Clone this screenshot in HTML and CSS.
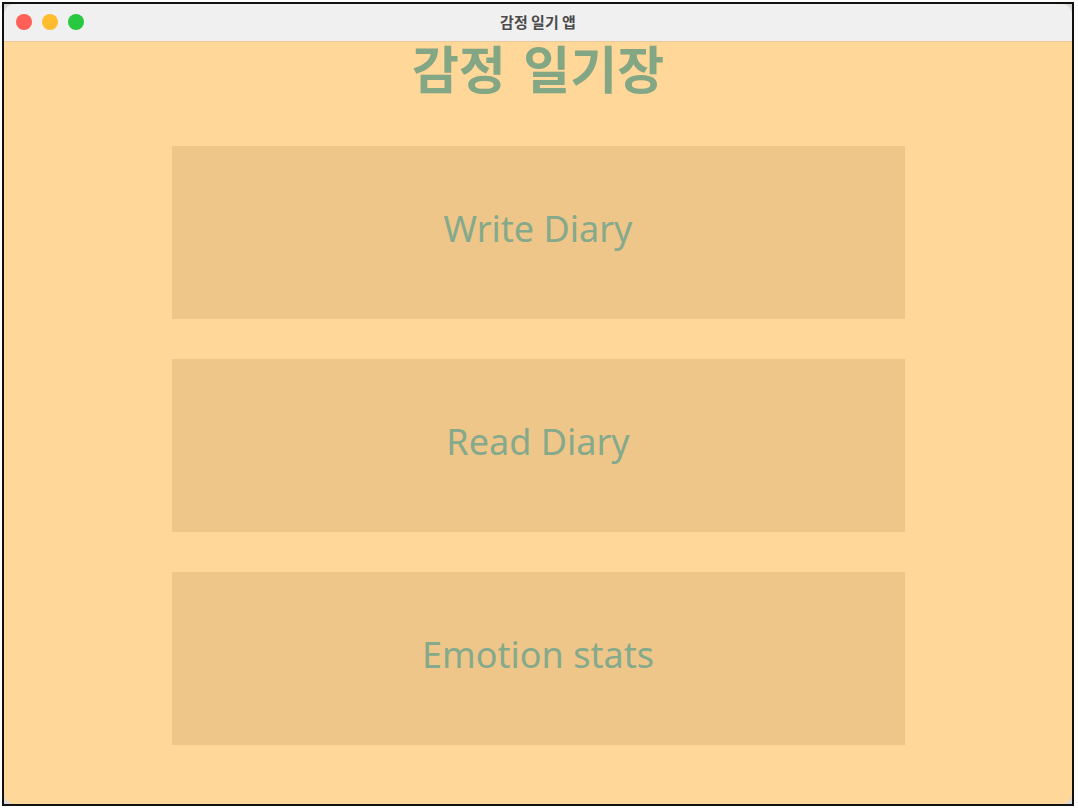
FILE: index.html
```html
<!DOCTYPE html>
<html>
<head>
<meta charset="utf-8">
<link rel="stylesheet" href="styles.css">
</head>
<body>
<div class="frame">
  <div class="window">
    <div class="titlebar">
      <div class="lights">
        <span class="light red"></span>
        <span class="light yellow"></span>
        <span class="light green"></span>
      </div>
      <div class="wtitle">감정 일기 앱</div>
    </div>
    <div class="content">
      <h1 class="heading">감정 일기장</h1>
      <div class="buttons">
        <div class="btn">Write Diary</div>
        <div class="btn">Read Diary</div>
        <div class="btn">Emotion stats</div>
      </div>
    </div>
  </div>
</div>
</body>
</html>
```
FILE: styles.css
```css
html, body {
  margin: 0;
  padding: 0;
  background: #ffffff;
  width: 1078px;
  height: 809px;
  overflow: hidden;
}
.frame {
  margin: 2px 0 0 2px;
  width: 1072px;
  height: 804px;
  box-sizing: border-box;
  border: 2px solid #111;
  background: #d8d8d8;
}
.window {
  width: 100%;
  height: 100%;
  border-radius: 10px;
  overflow: hidden;
  background: #fed799;
  display: flex;
  flex-direction: column;
}
.titlebar {
  height: 37px;
  flex: none;
  background: #f1f0f0;
  border-bottom: 1px solid #e8c999;
  position: relative;
  display: flex;
  align-items: center;
  justify-content: center;
}
.lights {
  position: absolute;
  left: 12px;
  top: 10px;
  display: flex;
  gap: 10px;
}
.light {
  width: 16px;
  height: 16px;
  border-radius: 50%;
  display: block;
}
.red { background: #fe5f57; }
.yellow { background: #febc2e; }
.green { background: #28c840; }
.wtitle {
  font-family: "Noto Sans CJK KR", "Noto Sans", sans-serif;
  font-weight: 700;
  font-size: 15px;
  line-height: 20px;
  color: #4b4b4b;
  padding-bottom: 1px;
}
.content {
  flex: 1;
  display: flex;
  flex-direction: column;
  align-items: center;
}
.heading {
  margin: 0;
  font-family: "Noto Sans CJK KR", sans-serif;
  font-weight: 700;
  font-size: 51px;
  line-height: 50px;
  color: #83a685;
  letter-spacing: 0;
  word-spacing: 6px;
}
.buttons {
  margin-top: 54px;
  display: flex;
  flex-direction: column;
  gap: 40px;
}
.btn {
  width: 733px;
  height: 173px;
  background: #eec68a;
  display: flex;
  align-items: center;
  justify-content: center;
  padding-bottom: 8px;
  box-sizing: border-box;
  font-family: "Noto Sans", sans-serif;
  font-size: 36px;
  color: #85a98b;
}
```
